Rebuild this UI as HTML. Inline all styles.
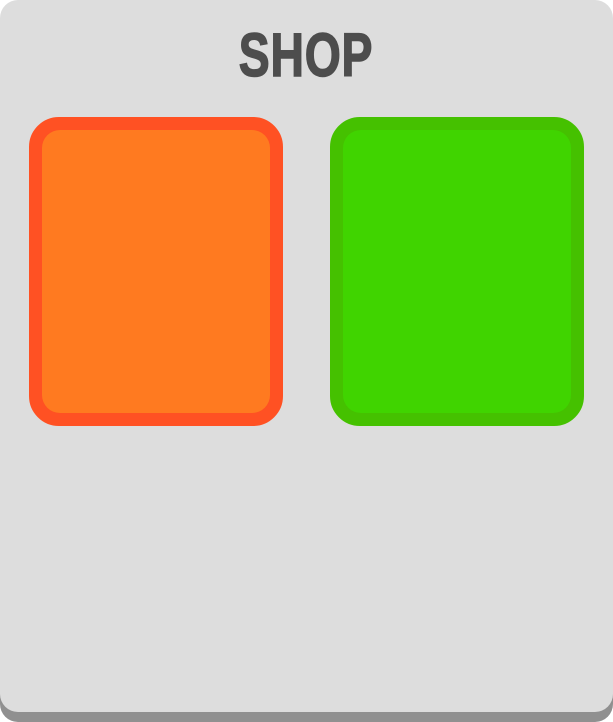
<!DOCTYPE html>
<html><head><style>
html,body{margin:0;padding:0;background:#fff;width:613px;height:722px;overflow:hidden}
.shadow{position:absolute;left:0;top:10px;width:613px;height:712px;background:#909090;border-radius:18px}
.panel{position:absolute;left:0;top:0;width:613px;height:712px;background:#dddddd;border-radius:18px}
.title{position:absolute;left:0;top:22px;width:612px;text-align:center;font-family:"Liberation Sans",sans-serif;font-weight:bold;font-size:61px;line-height:66px;color:#4d4d4d;transform:scaleX(0.76);letter-spacing:1px;-webkit-text-stroke:1.5px #4d4d4d}
.card{position:absolute;top:117px;width:228px;height:283px;border:13px solid;border-radius:30px}
.card .in{position:absolute;inset:0;border-radius:18px}
.o{left:29px;border-color:#ff5123;background:#ff5123}
.o .in{background:#ff7a20}
.g{left:330px;border-color:#45c100;background:#45c100}
.g .in{background:#40d400}
</style></head><body>
<div class="shadow"></div>
<div class="panel"></div>
<div class="title">SHOP</div>
<div class="card o"><div class="in"></div></div>
<div class="card g"><div class="in"></div></div>
</body></html>
